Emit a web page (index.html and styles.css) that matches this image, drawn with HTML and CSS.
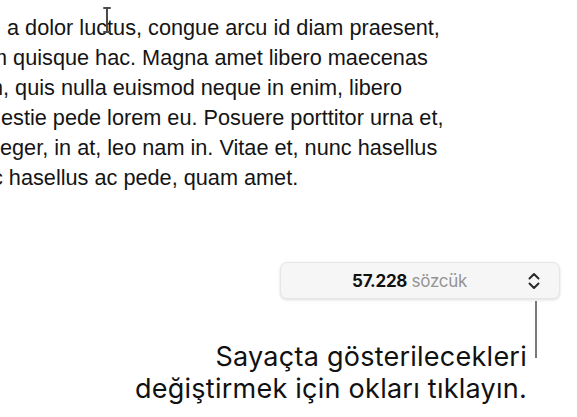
FILE: index.html
```html
<!DOCTYPE html>
<html lang="tr">
<head>
<meta charset="utf-8">
<link rel="stylesheet" href="styles.css">
</head>
<body>
<div class="page">
  <div class="doc">
    <div class="line l1">a dolor luc<span class="cursor-host">t<span class="ibeam"></span></span>us, congue arcu id diam praesent,</div>
    <div class="line l2">m quisque hac. Magna amet libero maecenas</div>
    <div class="line l3">m, quis nulla euismod neque in enim, libero</div>
    <div class="line l4">estie pede lorem eu. Posuere porttitor urna et,</div>
    <div class="line l5">eger, in at, leo nam in. Vitae et, nunc hasellus</div>
    <div class="line l6">c hasellus ac pede, quam amet.</div>
  </div>
  <div class="counter-row">
    <div class="counter">
      <div class="count"><b>57.228</b> <span class="unit">sözcük</span></div>
      <svg class="stepper" width="12" height="20" viewBox="0 0 12 20">
        <path d="M1.5 7.5 L6 3 L10.5 7.5" fill="none" stroke="#2b2b2b" stroke-width="2" stroke-linecap="round" stroke-linejoin="round"/>
        <path d="M1.5 12.5 L6 17 L10.5 12.5" fill="none" stroke="#2b2b2b" stroke-width="2" stroke-linecap="round" stroke-linejoin="round"/>
      </svg>
    </div>
  </div>
  <div class="callout">
    <div class="caption">Sayaçta gösterilecekleri<br>değiştirmek için okları tıklayın.</div>
    <div class="leader"></div>
  </div>
</div>
</body>
</html>
```
FILE: styles.css
```css
html, body {
  margin: 0;
  padding: 0;
  background: #ffffff;
  overflow: hidden;
}
.page {
  width: 577px;
  height: 417px;
  overflow: hidden;
}
.doc {
  padding-top: 13px;
  font-family: "Liberation Sans", Arial, sans-serif;
  font-size: 21.7px;
  line-height: 30px;
  color: #141414;
}
.line {
  white-space: nowrap;
}
.l1 { margin-left: 7px; }
.l2 { margin-left: -11px; }
.l3 { margin-left: -15px; }
.l4 { margin-left: 1px; }
.l5 { margin-left: 0; }
.l6 { margin-left: -8px; }
.cursor-host {
  position: relative;
}
.ibeam {
  position: absolute;
  left: -1px;
  top: -8px;
  width: 2px;
  height: 26px;
  background: #4a4a4a;
}
.ibeam::before,
.ibeam::after {
  content: "";
  position: absolute;
  left: -3px;
  width: 8px;
  height: 2px;
  background: #4a4a4a;
  border-radius: 1px;
}
.ibeam::before { top: 0; }
.ibeam::after { bottom: 0; }
.counter-row {
  display: flex;
  justify-content: flex-end;
  padding-top: 69px;
  padding-right: 17px;
}
.counter {
  width: 280px;
  height: 37px;
  box-sizing: border-box;
  display: flex;
  align-items: center;
  background: #f6f6f6;
  border: 1px solid #e6e6e6;
  border-radius: 7px;
  box-shadow: 0 1px 3px rgba(0, 0, 0, 0.14);
  padding: 0 19px 0 0;
}
.count {
  flex: 1;
  text-align: center;
  padding-left: 10px;
  font-family: Inter, "Noto Sans", sans-serif;
  font-size: 17px;
  color: #949494;
  letter-spacing: -0.3px;
}
.count b {
  color: #111;
  font-weight: 700;
}
.stepper {
  display: block;
}
.callout {
  display: flex;
  justify-content: flex-end;
  padding-right: 40px;
}
.caption {
  align-self: flex-end;
  text-align: right;
  font-family: Inter, "Noto Sans", sans-serif;
  font-size: 27px;
  line-height: 32px;
  letter-spacing: 0.25px;
  color: #111;
  padding-top: 42px;
  margin-right: 8px;
}
.leader {
  width: 2px;
  height: 57px;
  background: #7a7a7a;
  margin-top: 2px;
}
```
